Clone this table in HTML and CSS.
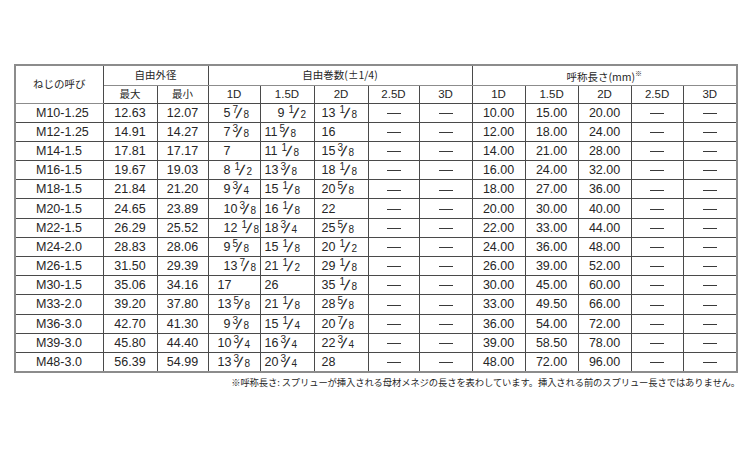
FILE: index.html
```html
<!DOCTYPE html>
<html lang="ja">
<head>
<meta charset="utf-8">
<link rel="stylesheet" href="styles.css">
</head>
<body>
<div class="page">
<table class="spec">
<colgroup>
<col style="width:88px"><col style="width:54px"><col style="width:51px"><col style="width:52px"><col style="width:54px"><col style="width:54px"><col style="width:51px"><col style="width:53px"><col style="width:53px"><col style="width:53px"><col style="width:53px"><col style="width:52px"><col style="width:54px">
</colgroup>
<thead>
<tr class="h1">
<th rowspan="2" class="jp">ねじの呼び</th>
<th colspan="2" class="jp">自由外径</th>
<th colspan="5" class="jp">自由巻数(±1/4)</th>
<th colspan="5" class="jp">呼称長さ(mm)<span class="kome">※</span></th>
</tr>
<tr class="h2">
<th class="jp">最大</th><th class="jp">最小</th>
<th>1D</th><th>1.5D</th><th>2D</th><th>2.5D</th><th>3D</th>
<th>1D</th><th>1.5D</th><th>2D</th><th>2.5D</th><th>3D</th>
</tr>
</thead>
<tbody>
<tr><td class="nm">M10-1.25</td><td>12.63</td><td>12.07</td><td class="fa">5<span class="f"><sup>7</sup><i>/</i><sub>8</sub></span></td><td class="fc">9<span class="f one"><sup>1</sup><i>/</i><sub>2</sub></span></td><td class="fe">13<span class="f one"><sup>1</sup><i>/</i><sub>8</sub></span></td><td><span class="dash"></span></td><td><span class="dash"></span></td><td>10.00</td><td>15.00</td><td>20.00</td><td><span class="dash"></span></td><td><span class="dash"></span></td></tr>
<tr><td class="nm">M12-1.25</td><td>14.91</td><td>14.27</td><td class="fa">7<span class="f"><sup>3</sup><i>/</i><sub>8</sub></span></td><td class="fd">11<span class="f"><sup>5</sup><i>/</i><sub>8</sub></span></td><td class="fe">16</td><td><span class="dash"></span></td><td><span class="dash"></span></td><td>12.00</td><td>18.00</td><td>24.00</td><td><span class="dash"></span></td><td><span class="dash"></span></td></tr>
<tr><td class="nm">M14-1.5</td><td>17.81</td><td>17.17</td><td class="fa">7</td><td class="fd">11<span class="f one"><sup>1</sup><i>/</i><sub>8</sub></span></td><td class="fe">15<span class="f"><sup>3</sup><i>/</i><sub>8</sub></span></td><td><span class="dash"></span></td><td><span class="dash"></span></td><td>14.00</td><td>21.00</td><td>28.00</td><td><span class="dash"></span></td><td><span class="dash"></span></td></tr>
<tr><td class="nm">M16-1.5</td><td>19.67</td><td>19.03</td><td class="fa">8<span class="f one"><sup>1</sup><i>/</i><sub>2</sub></span></td><td class="fd">13<span class="f"><sup>3</sup><i>/</i><sub>8</sub></span></td><td class="fe">18<span class="f one"><sup>1</sup><i>/</i><sub>8</sub></span></td><td><span class="dash"></span></td><td><span class="dash"></span></td><td>16.00</td><td>24.00</td><td>32.00</td><td><span class="dash"></span></td><td><span class="dash"></span></td></tr>
<tr><td class="nm">M18-1.5</td><td>21.84</td><td>21.20</td><td class="fa">9<span class="f"><sup>3</sup><i>/</i><sub>4</sub></span></td><td class="fd">15<span class="f one"><sup>1</sup><i>/</i><sub>8</sub></span></td><td class="fe">20<span class="f"><sup>5</sup><i>/</i><sub>8</sub></span></td><td><span class="dash"></span></td><td><span class="dash"></span></td><td>18.00</td><td>27.00</td><td>36.00</td><td><span class="dash"></span></td><td><span class="dash"></span></td></tr>
<tr><td class="nm">M20-1.5</td><td>24.65</td><td>23.89</td><td class="fa">10<span class="f"><sup>3</sup><i>/</i><sub>8</sub></span></td><td class="fd">16<span class="f one"><sup>1</sup><i>/</i><sub>8</sub></span></td><td class="fe">22</td><td><span class="dash"></span></td><td><span class="dash"></span></td><td>20.00</td><td>30.00</td><td>40.00</td><td><span class="dash"></span></td><td><span class="dash"></span></td></tr>
<tr><td class="nm">M22-1.5</td><td>26.29</td><td>25.52</td><td class="fa">12<span class="f one"><sup>1</sup><i>/</i><sub>8</sub></span></td><td class="fd">18<span class="f"><sup>3</sup><i>/</i><sub>4</sub></span></td><td class="fe">25<span class="f"><sup>5</sup><i>/</i><sub>8</sub></span></td><td><span class="dash"></span></td><td><span class="dash"></span></td><td>22.00</td><td>33.00</td><td>44.00</td><td><span class="dash"></span></td><td><span class="dash"></span></td></tr>
<tr><td class="nm">M24-2.0</td><td>28.83</td><td>28.06</td><td class="fa">9<span class="f"><sup>5</sup><i>/</i><sub>8</sub></span></td><td class="fd">15<span class="f one"><sup>1</sup><i>/</i><sub>8</sub></span></td><td class="fe">20<span class="f one"><sup>1</sup><i>/</i><sub>2</sub></span></td><td><span class="dash"></span></td><td><span class="dash"></span></td><td>24.00</td><td>36.00</td><td>48.00</td><td><span class="dash"></span></td><td><span class="dash"></span></td></tr>
<tr><td class="nm">M26-1.5</td><td>31.50</td><td>29.39</td><td class="fa">13<span class="f"><sup>7</sup><i>/</i><sub>8</sub></span></td><td class="fd">21<span class="f one"><sup>1</sup><i>/</i><sub>2</sub></span></td><td class="fe">29<span class="f one"><sup>1</sup><i>/</i><sub>8</sub></span></td><td><span class="dash"></span></td><td><span class="dash"></span></td><td>26.00</td><td>39.00</td><td>52.00</td><td><span class="dash"></span></td><td><span class="dash"></span></td></tr>
<tr><td class="nm">M30-1.5</td><td>35.06</td><td>34.16</td><td class="fb">17</td><td class="fd">26</td><td class="fe">35<span class="f one"><sup>1</sup><i>/</i><sub>8</sub></span></td><td><span class="dash"></span></td><td><span class="dash"></span></td><td>30.00</td><td>45.00</td><td>60.00</td><td><span class="dash"></span></td><td><span class="dash"></span></td></tr>
<tr><td class="nm">M33-2.0</td><td>39.20</td><td>37.80</td><td class="fb">13<span class="f"><sup>5</sup><i>/</i><sub>8</sub></span></td><td class="fd">21<span class="f one"><sup>1</sup><i>/</i><sub>8</sub></span></td><td class="fe">28<span class="f"><sup>5</sup><i>/</i><sub>8</sub></span></td><td><span class="dash"></span></td><td><span class="dash"></span></td><td>33.00</td><td>49.50</td><td>66.00</td><td><span class="dash"></span></td><td><span class="dash"></span></td></tr>
<tr><td class="nm">M36-3.0</td><td>42.70</td><td>41.30</td><td class="fa">9<span class="f"><sup>3</sup><i>/</i><sub>8</sub></span></td><td class="fd">15<span class="f one"><sup>1</sup><i>/</i><sub>4</sub></span></td><td class="fe">20<span class="f"><sup>7</sup><i>/</i><sub>8</sub></span></td><td><span class="dash"></span></td><td><span class="dash"></span></td><td>36.00</td><td>54.00</td><td>72.00</td><td><span class="dash"></span></td><td><span class="dash"></span></td></tr>
<tr><td class="nm">M39-3.0</td><td>45.80</td><td>44.40</td><td class="fb">10<span class="f"><sup>3</sup><i>/</i><sub>4</sub></span></td><td class="fd">16<span class="f"><sup>3</sup><i>/</i><sub>4</sub></span></td><td class="fe">22<span class="f"><sup>3</sup><i>/</i><sub>4</sub></span></td><td><span class="dash"></span></td><td><span class="dash"></span></td><td>39.00</td><td>58.50</td><td>78.00</td><td><span class="dash"></span></td><td><span class="dash"></span></td></tr>
<tr><td class="nm">M48-3.0</td><td>56.39</td><td>54.99</td><td class="fb">13<span class="f"><sup>3</sup><i>/</i><sub>8</sub></span></td><td class="fd">20<span class="f"><sup>3</sup><i>/</i><sub>4</sub></span></td><td class="fe">28</td><td><span class="dash"></span></td><td><span class="dash"></span></td><td>48.00</td><td>72.00</td><td>96.00</td><td><span class="dash"></span></td><td><span class="dash"></span></td></tr>
</tbody>
</table>
<p class="note">※呼称長さ: スプリューが挿入される母材メネジの長さを表わしています。挿入される前のスプリュー長さではありません。</p>
</div>
</body>
</html>
```

FILE: styles.css
```css
html, body {
  margin: 0;
  padding: 0;
  background: #ffffff;
}

.page {
  padding: 64px 0 0 14px;
  font-family: "Liberation Sans", "Noto Sans CJK JP", sans-serif;
  color: #262626;
}

.spec {
  border-collapse: collapse;
  table-layout: fixed;
  width: 722px;
  border: 2px solid #8c8c8c;
  font-size: 12.5px;
}

.spec th,
.spec td {
  border: 1px solid #4a4a4a;
  padding: 0;
  text-align: center;
  vertical-align: middle;
  white-space: nowrap;
  overflow: hidden;
  line-height: 14px;
}

.spec th {
  font-weight: normal;
  font-size: 11.5px;
}

.spec .jp {
  font-family: "Noto Sans CJK JP", sans-serif;
  font-size: 10.5px;
}

.h1 {
  height: 20px;
}

.h1 th {
  border-bottom-color: #8c8c8c;
}

.h2 {
  height: 18px;
}

.spec tbody tr {
  height: 19.2px;
}

.spec td.nm {
  text-align: left;
  padding-left: 20px;
}

.spec td.fa,
.spec td.fb,
.spec td.fc,
.spec td.fd,
.spec td.fe {
  text-align: left;
}

.spec td.fa { padding-left: 15px; }
.spec td.fb { padding-left: 9px; }
.spec td.fc { padding-left: 17px; }
.spec td.fd { padding-left: 4px; }
.spec td.fe { padding-left: 7px; }

.f {
  display: inline-block;
  position: relative;
  margin-left: 1px;
  width: 19px;
  height: 14px;
  vertical-align: top;
}

.f.one {
  margin-left: 4px;
  width: 18px;
}

.f sup,
.f sub {
  position: absolute;
  font-size: 10px;
  line-height: 10px;
}

.f sup {
  top: -1px;
  left: 1px;
}

.f.one sup {
  left: 0;
}

.f i {
  position: absolute;
  font-style: normal;
  font-size: 14px;
  line-height: 14px;
  top: 0;
  left: 6px;
  transform: skewX(-10deg) scaleX(1.3);
}

.f sub {
  bottom: 0;
  left: 12px;
}

.dash {
  display: inline-block;
  width: 14px;
  height: 1px;
  background: #3a3a3a;
  vertical-align: middle;
}

.kome {
  font-size: 7px;
  vertical-align: 5px;
}

.note {
  width: 726px;
  margin: 3px 0 0 0;
  text-align: right;
  font-family: "Noto Sans CJK JP", sans-serif;
  font-size: 9.3px;
  line-height: 12px;
  letter-spacing: -0.1px;
}
```
